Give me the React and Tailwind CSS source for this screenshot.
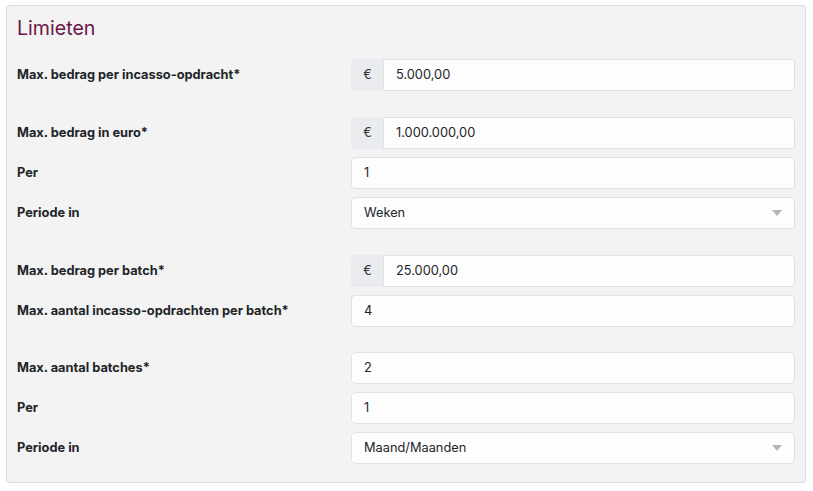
import React from "react";

const font = { fontFamily: "Inter, 'Noto Sans', sans-serif" };

function Row({ label, children, className = "" }) {
  return (
    <div className={"flex items-center h-8 " + className}>
      <div className="w-[334px] shrink-0 text-[12.8px] font-bold text-[#212529]">{label}</div>
      <div className="flex-1 h-8">{children}</div>
    </div>
  );
}

function Input({ value }) {
  return (
    <div className="h-8 flex items-center rounded-[4px] border border-[#e0e2e5] bg-[#fdfdfd] px-3 text-[12.8px] text-[#212529]">
      {value}
    </div>
  );
}

function Euro({ value }) {
  return (
    <div className="h-8 flex">
      <div className="w-8 flex items-center justify-center rounded-l-[4px] bg-[#e9ebee] border border-r-0 border-[#e9ebee] text-[12.8px] text-[#333]">
        €
      </div>
      <div className="flex-1 flex items-center rounded-r-[4px] border border-[#e0e2e5] bg-[#fdfdfd] px-3 text-[12.8px] text-[#212529]">
        {value}
      </div>
    </div>
  );
}

function Select({ value }) {
  return (
    <div className="h-8 flex items-center justify-between rounded-[4px] border border-[#e0e2e5] bg-[#fdfdfd] pl-3 pr-3 text-[12.8px] text-[#212529]">
      <span>{value}</span>
      <svg width="10" height="6" viewBox="0 0 10 6"><path d="M0 0 L10 0 L5 6 Z" fill="#b5b5b5" /></svg>
    </div>
  );
}

export default function App() {
  return (
    <div className="w-[813px] h-[491px] bg-white pt-[5px] pl-[6px]" style={font}>
      <div className="w-[800px] h-[478px] bg-[#f3f3f3] border border-[#dcdcdc] rounded-[3px] px-[10px] pt-[10px]">
        <h2 className="text-[19.6px] leading-[24px] text-[#6c1645] font-normal">Limieten</h2>
        <div className="mt-[19px] flex flex-col">
          <Row label="Max. bedrag per incasso-opdracht*"><Euro value="5.000,00" /></Row>
          <div className="mt-[26px] flex flex-col gap-2">
            <Row label="Max. bedrag in euro*"><Euro value="1.000.000,00" /></Row>
            <Row label="Per"><Input value="1" /></Row>
            <Row label="Periode in"><Select value="Weken" /></Row>
          </div>
          <div className="mt-[26px] flex flex-col gap-2">
            <Row label="Max. bedrag per batch*"><Euro value="25.000,00" /></Row>
            <Row label="Max. aantal incasso-opdrachten per batch*"><Input value="4" /></Row>
          </div>
          <div className="mt-[25px] flex flex-col gap-2">
            <Row label="Max. aantal batches*"><Input value="2" /></Row>
            <Row label="Per"><Input value="1" /></Row>
            <Row label="Periode in"><Select value="Maand/Maanden" /></Row>
          </div>
        </div>
      </div>
    </div>
  );
}
